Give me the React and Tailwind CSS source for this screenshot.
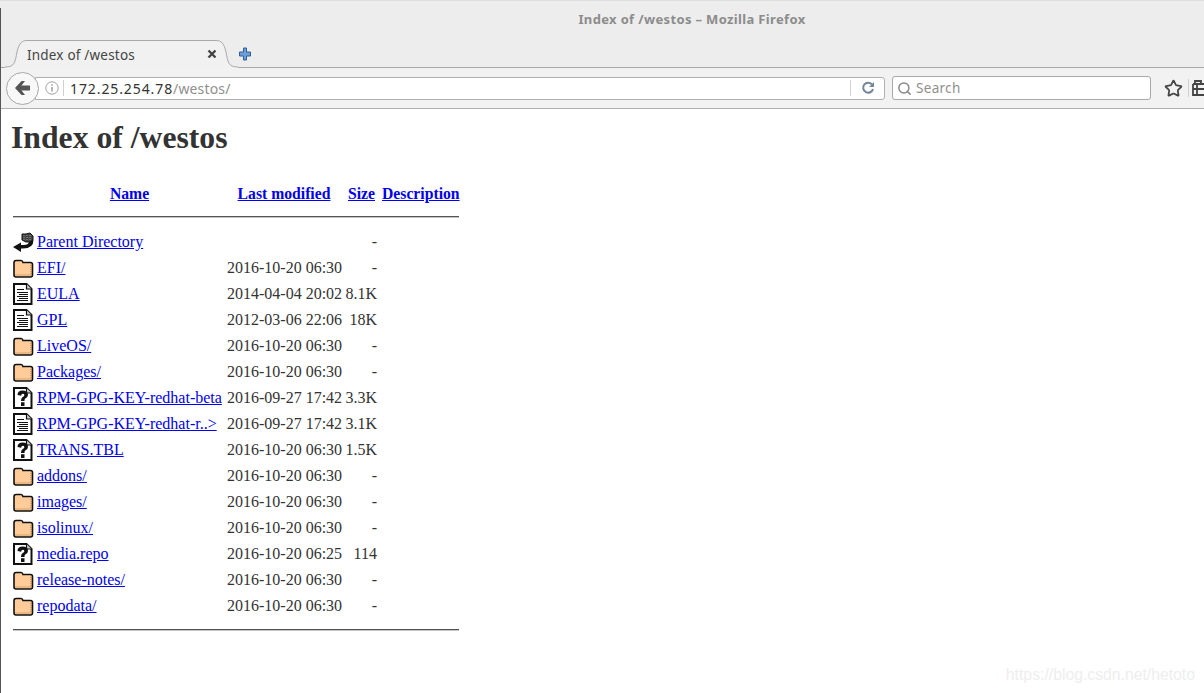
import { Star, Search } from 'lucide-react';

const rows = [
  ['back', 'Parent Directory', '', '-'],
  ['folder', 'EFI/', '2016-10-20 06:30', '-'],
  ['text', 'EULA', '2014-04-04 20:02', '8.1K'],
  ['text', 'GPL', '2012-03-06 22:06', '18K'],
  ['folder', 'LiveOS/', '2016-10-20 06:30', '-'],
  ['folder', 'Packages/', '2016-10-20 06:30', '-'],
  ['unknown', 'RPM-GPG-KEY-redhat-beta', '2016-09-27 17:42', '3.3K'],
  ['text', 'RPM-GPG-KEY-redhat-r..>', '2016-09-27 17:42', '3.1K'],
  ['unknown', 'TRANS.TBL', '2016-10-20 06:30', '1.5K'],
  ['folder', 'addons/', '2016-10-20 06:30', '-'],
  ['folder', 'images/', '2016-10-20 06:30', '-'],
  ['folder', 'isolinux/', '2016-10-20 06:30', '-'],
  ['unknown', 'media.repo', '2016-10-20 06:25', '114'],
  ['folder', 'release-notes/', '2016-10-20 06:30', '-'],
  ['folder', 'repodata/', '2016-10-20 06:30', '-'],
];

function FileIcon({ type }) {
  if (type === 'folder') {
    return (
      <svg width="21" height="22" viewBox="0 0 21 22" className="block">
        <path d="M1 6 Q1 3.5 3 3.5 H8 Q9.5 3.5 10 5.5 H17.5 Q19.5 5.5 19.5 7.5 V18 Q19.5 20 17.5 20 H3 Q1 20 1 18 Z" fill="#ffcc99" stroke="#111" strokeWidth="1.6" />
        <path d="M2.5 18 H18 M18 8 V18" stroke="#a9743c" strokeWidth="1" strokeDasharray="1 1" />
      </svg>
    );
  }
  if (type === 'back') {
    return (
      <svg width="21" height="22" viewBox="0 0 21 22" className="block">
        <path d="M9 3 H13 L17 2 L20 5 V9 L17 11 H13 L9 9 Z" fill="#444" stroke="#111" strokeWidth="1" />
        <path d="M11 4 V9 M14 4 V10 M17 4 V9" stroke="#999" strokeWidth="1" strokeDasharray="1 1" />
        <path d="M20.5 9 Q20.5 17.5 10 17.5 H8 V21 L0 16 L8 11.5 V14 H11 Q15 14 16.5 10.5 Z" fill="#111" />
      </svg>
    );
  }
  return (
    <svg width="20" height="22" viewBox="0 0 20 22" className="block">
      <path d="M1 1 H13.5 L18.5 6 V21 H1 Z" fill="#fff" stroke="#111" strokeWidth="2" />
      <path d="M13.5 1 V6 H18.5" fill="#ccc" stroke="#111" strokeWidth="1.2" />
      {type === 'text' ? (
        <path d="M4 6.5 H11 M4 9.5 H15 M6 11.5 H15 M4 13.5 H15 M6 15.5 H15 M4 17.5 H15" stroke="#111" strokeWidth="1.2" />
      ) : (
        <path d="M4.5 8 Q4.5 3.5 9.5 3.5 Q15 3.5 15 8 Q15 10.5 12 11.8 Q11.5 12.2 11.5 14 H8 Q8 10.5 10.5 9.5 Q11.3 9 11.3 8 Q11.3 6.8 9.8 6.8 Q8.2 6.8 8.2 8.8 Z M8 15.2 H11.5 V19 H8 Z" fill="#111" />
      )}
    </svg>
  );
}

function TabCurve({ flip }) {
  return (
    <svg width="22" height="28" viewBox="0 0 22 28" className={flip ? 'block -scale-x-100' : 'block'}>
      <path d="M0 27 C10 27 10 22 12 12 C14 3 17 0.5 22 0.5 V28 H0 Z" fill="#f1f1f1" />
      <path d="M0 27 C10 27 10 22 12 12 C14 3 17 0.5 22 0.5" fill="none" stroke="#a8a8a8" strokeWidth="1" />
    </svg>
  );
}

export default function App() {
  return (
    <div className="relative h-[693px] w-[1204px] overflow-hidden bg-white font-['Liberation_Serif',serif] text-[#333333]">
      <div className="bg-[#ededed] font-['Noto_Sans',sans-serif] border-t border-[#dddddd]">
        <div className="h-[39px] pt-[10px] pl-[180px] text-center text-[13px] leading-[17px] font-bold tracking-[0.35px] text-[#8c8c8c]">
          Index of /westos – Mozilla Firefox
        </div>
        <div className="flex h-[28px] items-end border-b border-[#a8a8a8] pl-[5px]">
          <div className="-mb-px flex h-[28px]">
            <TabCurve />
            <div className="flex w-[189px] items-center justify-between border-t border-[#a8a8a8] bg-[#f1f1f1]">
              <span className="mt-[2px] text-[13.5px] tracking-[0.2px] text-[#444444]">Index of /westos</span>
              <svg width="10" height="10" viewBox="0 0 10 10" className="mr-[-1px] mb-[1px]">
                <path d="M1.5 1.5 L8.5 8.5 M8.5 1.5 L1.5 8.5" stroke="#444" strokeWidth="2.4" />
              </svg>
            </div>
            <TabCurve flip />
          </div>
          <svg width="12" height="14" viewBox="0 0 12 14" className="mb-[6px] ml-[1px]">
            <path d="M4.5 1 H7.5 V5 H11.5 V9 H7.5 V13 H4.5 V9 H0.5 V5 H4.5 Z" fill="#6d9fd6" stroke="#2f5f99" strokeWidth="1" />
          </svg>
        </div>
      </div>

      <div className="flex h-[41px] items-center border-b border-[#b0b0b0] bg-[#f2f2f2] font-['Noto_Sans',sans-serif]">
        <div className="relative z-10 ml-[6px] flex h-[33px] w-[33px] shrink-0 items-center justify-center rounded-full border border-[#a8a8a8] bg-[#f8f8f8]">
          <svg width="15" height="14" viewBox="0 0 15 14">
            <path d="M6.5 0 L0 7 L6.5 14 H10 L6.5 9.5 H15 V4.5 H6.5 L10 0 Z" fill="#555" />
          </svg>
        </div>
        <div className="-ml-[4px] flex h-[23px] w-[850px] shrink-0 items-center rounded-r-[3px] border border-[#b0b0b0] bg-white">
          <svg width="14" height="14" viewBox="0 0 14 14" className="ml-[9px]">
            <circle cx="7" cy="7" r="6.2" fill="none" stroke="#a0a0a0" strokeWidth="1" />
            <path d="M7 6 V10.5 M7 3.2 V4.8" stroke="#909090" strokeWidth="1.3" />
          </svg>
          <div className="ml-[4px] h-[16px] w-px bg-[#d0d0d0]" />
          <span className="ml-[6px] text-[14px] tracking-[0.9px] text-[#333333]">172.25.254.78<span className="tracking-[0.15px] text-[#8f8f8f]">/westos/</span></span>
          <div className="ml-auto h-[16px] w-px bg-[#d0d0d0]" />
          <svg width="14" height="14" viewBox="0 0 14 14" className="mr-[9px] ml-[10px]">
            <path d="M11 3.5 A5 5 0 1 0 12 8" fill="none" stroke="#75869b" strokeWidth="2" />
            <path d="M8 6 L13 6 L13 1 Z" fill="#75869b" />
          </svg>
        </div>
        <div className="ml-[7px] flex h-[24px] w-[259px] shrink-0 items-center rounded-[3px] border border-[#a8a8a8] bg-white">
          <Search className="ml-[4px] h-[15px] w-[15px] text-[#8a8a8a]" strokeWidth={2.4} />
          <span className="ml-[4px] text-[13.5px] tracking-[0.3px] text-[#8f8f8f]">Search</span>
        </div>
        <Star className="ml-[13px] h-[19px] w-[19px] shrink-0 text-[#444444]" strokeWidth={2.2} />
        <div className="ml-[5px] h-[18px] w-px shrink-0 bg-[#d0d0d0]" />
        <svg width="12" height="18" viewBox="0 0 12 18" className="ml-[3px] shrink-0">
          <path d="M1 5 H12 M1 5 V16 H12 M1 10 H12 M5 5 V16 M3 5 V2 H9 V5" fill="none" stroke="#444" strokeWidth="1.8" />
        </svg>
      </div>

      <div className="pl-[11px]">
        <h1 className="pt-[10px] text-[31.7px] leading-[37px] font-bold text-[#333333]">Index of /westos</h1>
        <table className="mt-[26px] w-[450px] table-fixed border-separate border-spacing-[2px] text-[16px] leading-[18px]">
          <colgroup>
            <col className="w-[22px]" />
            <col className="w-[188px]" />
            <col className="w-[116px]" />
            <col className="w-[35px]" />
            <col className="w-[77px]" />
          </colgroup>
          <thead>
            <tr className="h-[20px] text-[15.7px] font-bold text-[#0000ee] underline">
              <th></th>
              <th className="pr-[3px]">Name</th>
              <th className="pr-[2px]">Last modified</th>
              <th className="pr-[2px]">Size</th>
              <th className="pr-[4px]">Description</th>
            </tr>
            <tr>
              <th colSpan="5" className="pt-[10px] pb-[10px]">
                <div className="h-[2px] border-t border-[#555555] bg-[#c4c4c4]" />
              </th>
            </tr>
          </thead>
          <tbody>
            {rows.map((row) => (
              <tr key={row[1]} className="h-[24px]">
                <td className="p-0 align-middle"><FileIcon type={row[0]} /></td>
                <td className="overflow-visible p-0 whitespace-nowrap"><a className="text-[#0000ee] underline" href="#">{row[1]}</a></td>
                <td className="p-0 whitespace-nowrap">{row[2]}</td>
                <td className="pr-[3px] text-right whitespace-nowrap">{row[3]}</td>
                <td></td>
              </tr>
            ))}
            <tr>
              <th colSpan="5" className="pt-[9px]">
                <div className="h-[2px] border-t border-[#555555] bg-[#c4c4c4]" />
              </th>
            </tr>
          </tbody>
        </table>
      </div>

      <div className="absolute right-[9px] bottom-[6px] font-['Liberation_Sans',sans-serif] text-[15.75px] text-[#eeeeee]">https://blog.csdn.net/hetoto</div>
      <div className="absolute top-[8px] left-0 h-[685px] w-px bg-[#555555]" />
    </div>
  );
}
